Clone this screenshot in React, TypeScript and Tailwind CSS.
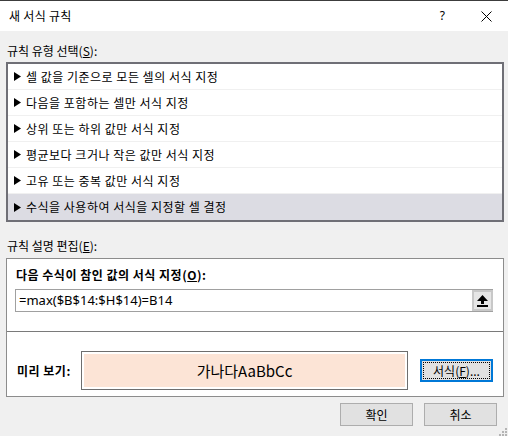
import React from 'react'

const ruleTypes = [
  '셀 값을 기준으로 모든 셀의 서식 지정',
  '다음을 포함하는 셀만 서식 지정',
  '상위 또는 하위 값만 서식 지정',
  '평균보다 크거나 작은 값만 서식 지정',
  '고유 또는 중복 값만 서식 지정',
  '수식을 사용하여 서식을 지정할 셀 결정',
]

const SELECTED = 5

function Arrow() {
  return (
    <svg width="7" height="9" viewBox="0 0 7 9" className="shrink-0">
      <polygon points="0,0 7,4.5 0,9" fill="#000" />
    </svg>
  )
}

function UpButton() {
  return (
    <div className="w-[21px] h-full flex items-center justify-center bg-[#e6e6e6] border-2 border-[#c8c8c8]">
      <svg width="11" height="12" viewBox="0 0 11 12">
        <polygon points="5.5,0 11,6 7,6 7,9 4,9 4,6 0,6" fill="#000" />
        <rect x="0" y="10" width="11" height="2" fill="#000" />
      </svg>
    </div>
  )
}

export default function App() {
  return (
    <div className="w-[508px] h-[436px] bg-[#f0f0f0] flex flex-col text-black text-[12px] font-['Noto_Sans_CJK_KR',sans-serif] overflow-hidden">
      {/* Title bar */}
      <div className="h-[31px] bg-white border-t border-[#3c3c3c] flex items-center pl-[9px] shrink-0">
        <span className="leading-[16px] tracking-[0.3px]">새 서식 규칙</span>
        <span className="ml-auto mr-[36px] leading-[16px] font-['Noto_Sans',sans-serif]">?</span>
        <svg width="11" height="11" viewBox="0 0 11 11" className="mr-[16px]">
          <path d="M0.5 0.5 L10.5 10.5 M10.5 0.5 L0.5 10.5" stroke="#000" strokeWidth="1" />
        </svg>
      </div>

      <div className="pl-[6px] pr-[4px] flex flex-col">
        {/* Rule type */}
        <div className="mt-[12px] pl-[1px] leading-[16px]">
          규칙 유형 선택(<span className="underline">S</span>):
        </div>
        <div className="mt-[3px] border-2 border-[#6f6f76] bg-white flex flex-col">
          {ruleTypes.map((rule, i) => (
            <div
              key={rule}
              className={
                i === SELECTED
                  ? 'h-[26px] flex items-center gap-[5px] pl-[6px] bg-[#dcdce3]'
                  : 'h-[26px] flex items-center gap-[5px] pl-[6px] border-b border-[#f0f0f0]'
              }
            >
              <Arrow />
              <span className="leading-[16px] tracking-[0.5px]">{rule}</span>
            </div>
          ))}
        </div>

        {/* Rule description */}
        <div className="mt-[16px] pl-[1px] leading-[16px]">
          규칙 설명 편집(<span className="underline">E</span>):
        </div>
        <div className="mt-[4px] border border-[#8c8c8c] bg-white flex flex-col">
          <div className="mt-[8px] pl-[9px] leading-[16px] font-bold tracking-[0.5px]">
            다음 수식이 참인 값의 서식 지정(<span className="underline">O</span>):
          </div>
          <div className="mt-[6px] ml-[8px] mr-[10px] h-[23px] flex items-stretch border-y border-l border-[#a0a0a0]">
            <div className="flex-1 flex items-center pl-[3px] font-['Noto_Sans',sans-serif] text-[13px]">
              =max($B$14:$H$14)=B14
            </div>
            <UpButton />
          </div>
          <div className="mt-[19px] h-px bg-[#7a7a7a]" />
          <div className="mt-[19px] mb-[6px] pl-[10px] pr-[10px] flex items-center">
            <div className="w-[64px] font-bold leading-[16px] tracking-[0.5px]">미리 보기:</div>
            <div className="w-[327px] h-[39px] border border-[#6e6e6e] bg-white p-[2px]">
              <div className="w-full h-full bg-[#fce4d6] flex items-center justify-center text-[15px] leading-[20px]">
                가나다AaBbCc
              </div>
            </div>
            <div className="ml-auto w-[73px] h-[23px] border-2 border-[#0078d7] bg-[#e1e1e1] p-[1px]">
              <div className="w-full h-full border border-dotted border-black flex items-center justify-center leading-[16px]">
                서식(<span className="underline">F</span>)...
              </div>
            </div>
          </div>
        </div>

        {/* Buttons */}
        <div className="mt-[6px] pr-[7px] flex justify-end gap-[11px]">
          <button className="w-[73px] h-[23px] border border-[#adadad] bg-[#e1e1e1] leading-[16px]">확인</button>
          <button className="w-[73px] h-[23px] border border-[#adadad] bg-[#e1e1e1] leading-[16px]">취소</button>
        </div>
      </div>

      {/* Resize grip */}
      <div className="flex justify-end pr-[1px] mt-[2px]">
        <svg width="8" height="8" viewBox="0 0 8 8">
          <rect x="6" y="0" width="2" height="2" fill="#b4b4b4" />
          <rect x="3" y="3" width="2" height="2" fill="#b4b4b4" />
          <rect x="6" y="3" width="2" height="2" fill="#b4b4b4" />
          <rect x="0" y="6" width="2" height="2" fill="#b4b4b4" />
          <rect x="3" y="6" width="2" height="2" fill="#b4b4b4" />
          <rect x="6" y="6" width="2" height="2" fill="#b4b4b4" />
        </svg>
      </div>
    </div>
  )
}
